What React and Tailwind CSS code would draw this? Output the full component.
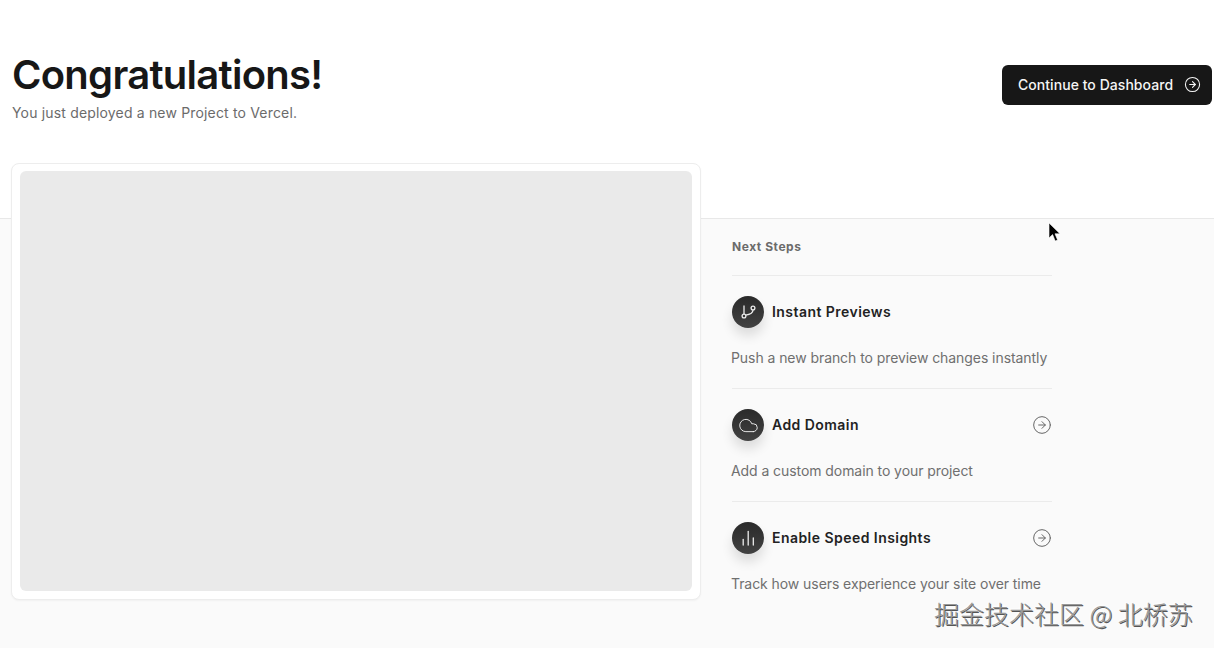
import React from 'react';
import { Cloud, CircleArrowRight } from 'lucide-react';

// lucide's versions of these two don't match, so they are drawn by hand
const BranchIcon = () => (
  <svg width="20" height="20" viewBox="0 0 20 20" fill="none" stroke="currentColor" strokeWidth="1.3">
    <path d="M6 3.5v8.6" />
    <circle cx="6" cy="14" r="1.9" />
    <circle cx="15" cy="6" r="1.9" />
    <path d="M15 7.9c0 3.4-3.6 4.6-7.4 5.2" />
  </svg>
);

const BarsIcon = () => (
  <svg width="20" height="20" viewBox="0 0 20 20" fill="none" stroke="currentColor" strokeWidth="1.3" strokeLinecap="round">
    <path d="M5.2 11.5v5.5" />
    <path d="M10.2 3.5v13.5" />
    <path d="M15.3 10v7" />
  </svg>
);

const CloudIcon = () => <Cloud size={21} strokeWidth={1.1} />;

const steps = [
  { title: 'Instant Previews', text: 'Push a new branch to preview changes instantly', Icon: BranchIcon },
  { title: 'Add Domain', text: 'Add a custom domain to your project', Icon: CloudIcon, arrow: true },
  { title: 'Enable Speed Insights', text: 'Track how users experience your site over time', Icon: BarsIcon, arrow: true },
];

const StepRow = ({ title, text, Icon, arrow }) => (
  <div className="h-[113px] border-t border-[#ebebeb] pt-[20px]">
    <div className="flex h-[32px] items-center">
      <div className="flex h-[32px] w-[32px] items-center justify-center rounded-full bg-gradient-to-b from-[#2a2a2a] to-[#424242] text-[#ececec] shadow-[0_8px_12px_rgba(0,0,0,0.12)]">
        <Icon />
      </div>
      <span className="ml-2 pb-[2px] text-[14px] font-semibold tracking-[0.45px] text-[#222222]">{title}</span>
      {arrow && <CircleArrowRight size={20} strokeWidth={1.2} className="ml-auto text-[#666666]" />}
    </div>
    <p className="-ml-px mt-[20px] whitespace-nowrap text-[14px] leading-[20px] tracking-[-0.07px] text-[#6f6f6f]">{text}</p>
  </div>
);

export default function App() {
  return (
    <div className="relative h-[648px] w-[1214px] overflow-hidden bg-[#fafafa] font-['Inter',sans-serif]">
      <header className="flex h-[219px] items-start justify-between border-b border-[#e8e8e8] bg-white pl-3 pr-[2px] pt-[51px]">
        <div>
          <h1 className="text-[40px] font-semibold leading-[48px] tracking-[-0.73px] text-[#171717]">Congratulations!</h1>
          <p className="mt-[4px] text-[14px] leading-[20px] tracking-[0.17px] text-[#6b6b6b]">You just deployed a new Project to Vercel.</p>
        </div>
        <button className="mt-[14px] flex h-[40px] w-[210px] items-center justify-between rounded-md bg-[#171717] pb-px pl-4 pr-[11px] text-[14px] font-medium tracking-[0.05px] text-[#f5f5f5]">
          Continue to Dashboard
          <CircleArrowRight size={17} strokeWidth={1.5} />
        </button>
      </header>

      <main className="-mt-[56px] flex items-start pl-3">
        <div className="-ml-px h-[437px] w-[690px] rounded-lg border border-[#ededed] bg-white pb-[7px] pl-[8px] pr-[8px] pt-[7px] shadow-[0_1px_2px_rgba(0,0,0,0.04)]">
          <div className="h-[420px] w-full rounded-md bg-[#eaeaea]" />
        </div>
        <aside className="ml-[31px] w-[320px] pt-[76px]">
          <h2 className="h-[36px] text-[12px] font-bold leading-[16px] tracking-[0.55px] text-[#6b6b6b]">Next Steps</h2>
          <div>
            {steps.map((step) => (
              <StepRow key={step.title} {...step} />
            ))}
          </div>
        </aside>
      </main>

      {/* mouse pointer captured in the shot */}
      <svg className="absolute left-[1048px] top-[222px]" width="13" height="21" viewBox="0 0 13 21">
        <path d="M1 1v15l3.6-3.4 2.6 6.4 2.4-1-2.6-6.2H12z" fill="#000" stroke="#fff" strokeWidth="0.6" />
      </svg>

      {/* watermark */}
      <div className="absolute left-[934px] top-[598px] whitespace-nowrap font-['Noto_Sans_CJK_SC',sans-serif] text-[25px] font-light leading-[30px] text-[#999999] [text-shadow:1px_1px_0_#555555,-1px_-1px_2px_#ffffff]">
        掘金技术社区 @ 北桥苏
      </div>
    </div>
  );
}
